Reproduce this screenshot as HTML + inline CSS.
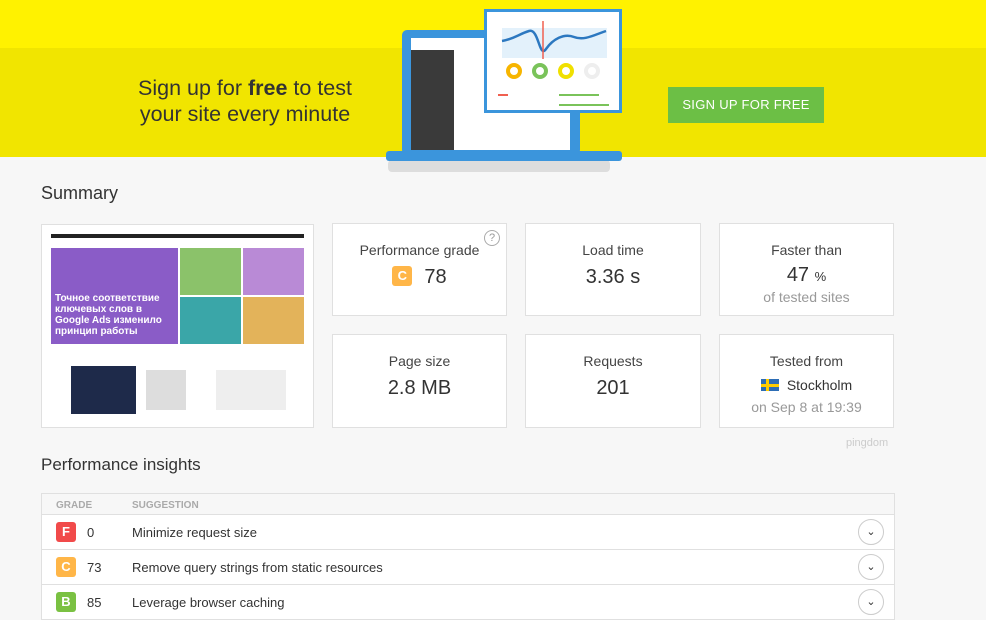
<!DOCTYPE html>
<html><head><meta charset="utf-8"><style>
*{margin:0;padding:0;box-sizing:border-box}
body{width:986px;height:619px;overflow:hidden;background:#f7f7f7;font-family:"Liberation Sans",sans-serif;color:#333;position:relative}
.top{position:absolute;left:0;top:0;width:986px;height:48px;background:#fff200}
.band{position:absolute;left:0;top:48px;width:986px;height:109px;background:#f1e500}
.abs{position:absolute}
.card{position:absolute;background:#fff;border:1px solid #e0e0e0;text-align:center}
.card .l{font-size:14px;color:#444;margin-top:18px}
.card .v{font-size:20px;color:#333;margin-top:8px}
.badge{display:inline-block;width:20px;height:20px;border-radius:3px;color:#fff;font-weight:bold;font-size:13px;line-height:20px;text-align:center}
.row{position:absolute;left:41px;width:854px;height:35px;background:#fff;border:1px solid #e0e0e0;border-top:none}
.row .badge{position:absolute;left:14px;top:7px}
.row .n{position:absolute;left:45px;top:10px;font-size:13px}
.row .s{position:absolute;left:90px;top:10px;font-size:13px}
.row .c{position:absolute;right:10px;top:4px;width:26px;height:26px;border:1px solid #ccc;border-radius:50%;text-align:center;font-size:11px;line-height:24px;color:#333;background:#fff}
</style></head><body>
<div class="top"></div><div class="band"></div>
<div class="abs" style="left:130px;top:75px;font-size:21.5px;color:#333;line-height:26px;text-align:center;width:230px">Sign up for <b>free</b> to test your site every minute</div>
<div class="abs" style="left:668px;top:87px;width:156px;height:36px;background:#6cbf45;color:#fff;font-size:13px;line-height:36px;text-align:center;letter-spacing:.3px">SIGN UP FOR FREE</div>
<div class="abs" style="left:388px;top:160px;width:222px;height:12px;background:#ddd;border-radius:4px"></div>
<div class="abs" style="left:402px;top:30px;width:178px;height:125px;background:#3b95dc;border-radius:5px"></div>
<div class="abs" style="left:411px;top:38px;width:159px;height:112px;background:#fff"></div>
<div class="abs" style="left:411px;top:50px;width:43px;height:100px;background:#3a3a3a"></div>
<div class="abs" style="left:386px;top:151px;width:236px;height:10px;background:#3b95dc;border-radius:3px"></div>
<div class="abs" style="left:484px;top:9px;width:138px;height:104px;background:#fff;border:3px solid #3b95dc"></div>
<div class="abs" style="left:502px;top:28px;width:105px;height:30px;background:#e3f1fb"></div>
<svg class="abs" style="left:484px;top:9px" width="138" height="104"><path d="M18 32 C30 30 35 25 45 22 S55 50 62 40 S80 24 90 28 S110 26 122 22" stroke="#2c78c0" stroke-width="2.5" fill="none"/><line x1="59" y1="12" x2="59" y2="50" stroke="#f06050" stroke-width="1.5"/>
<circle cx="30" cy="62" r="6" fill="none" stroke="#f7b500" stroke-width="4"/><circle cx="56" cy="62" r="6" fill="none" stroke="#7ac35a" stroke-width="4"/><circle cx="82" cy="62" r="6" fill="none" stroke="#f0e000" stroke-width="4"/><circle cx="108" cy="62" r="6" fill="none" stroke="#eee" stroke-width="4"/>
<rect x="14" y="85" width="10" height="2" fill="#f06050"/><rect x="75" y="85" width="40" height="2" fill="#7ac35a"/><rect x="75" y="95" width="50" height="2" fill="#7ac35a"/></svg>
<div class="abs" style="left:41px;top:183px;font-size:18px;color:#333">Summary</div>
<div class="abs" style="left:41px;top:224px;width:273px;height:204px;background:#fff;border:1px solid #e0e0e0;padding:9px">
 <div style="height:4px;background:#222"></div>
 <div style="height:10px;background:#fff"></div>
 <div style="display:flex;height:96px"><div style="width:127px;background:#8a5cc7;color:#fff;font-size:10px;font-weight:bold;padding:45px 4px 0">Точное соответствие ключевых слов в Google Ads изменило принцип работы</div><div style="flex:1;display:grid;grid-template-columns:1fr 1fr;gap:2px;margin-left:2px"><div style="background:#8bc26a"></div><div style="background:#b98ad6"></div><div style="background:#3aa6a8"></div><div style="background:#e3b35a"></div></div></div>
 <div style="height:60px;display:flex;margin-top:12px"><div style="width:65px;height:48px;background:#1e2a4a;margin-top:10px;margin-left:20px"></div><div style="width:40px;margin-left:10px;margin-top:14px;height:40px;background:#ddd"></div><div style="width:70px;margin-left:30px;height:40px;background:#eee;margin-top:14px"></div></div>
</div>
<div class="card" style="left:332px;top:223px;width:175px;height:93px"><div class="l">Performance grade</div><div class="v"><span class="badge" style="background:#ffb648;vertical-align:3px;margin-right:12px">C</span>78</div><div class="abs" style="right:6px;top:6px;width:16px;height:16px;border:1px solid #aaa;border-radius:50%;font-size:11px;color:#999;line-height:14px">?</div></div>
<div class="card" style="left:525px;top:223px;width:176px;height:93px"><div class="l">Load time</div><div class="v">3.36 s</div></div>
<div class="card" style="left:719px;top:223px;width:175px;height:93px"><div class="l">Faster than</div><div class="v" style="margin-top:6px">47 <span style="font-size:13px">%</span></div><div style="font-size:14px;color:#999;margin-top:2px">of tested sites</div></div>
<div class="card" style="left:332px;top:334px;width:175px;height:94px"><div class="l">Page size</div><div class="v">2.8 MB</div></div>
<div class="card" style="left:525px;top:334px;width:176px;height:94px"><div class="l">Requests</div><div class="v">201</div></div>
<div class="card" style="left:719px;top:334px;width:175px;height:94px"><div class="l">Tested from</div><div style="font-size:14px;margin-top:8px"><span style="display:inline-block;width:18px;height:12px;background:#2d6db5;position:relative;vertical-align:-1px;margin-right:8px"><span style="position:absolute;left:5px;top:0;width:3px;height:12px;background:#fecc00"></span><span style="position:absolute;left:0;top:5px;width:18px;height:3px;background:#fecc00"></span></span>Stockholm</div><div style="font-size:14px;color:#999;margin-top:6px">on Sep 8 at 19:39</div></div>
<div class="abs" style="left:846px;top:437px;font-size:11px;color:#ccc">pingdom</div>
<div class="abs" style="left:41px;top:455px;font-size:17px;color:#333">Performance insights</div>
<div class="abs" style="left:41px;top:493px;width:854px;height:22px;background:#f7f7f7;border:1px solid #e0e0e0;font-size:10px;color:#aaa;font-weight:bold"><span class="abs" style="left:14px;top:6px">GRADE</span><span class="abs" style="left:90px;top:6px">SUGGESTION</span></div>
<div class="row" style="top:515px"><span class="badge" style="background:#f14a4a">F</span><span class="n">0</span><span class="s">Minimize request size</span><span class="c">&#8964;</span></div>
<div class="row" style="top:550px"><span class="badge" style="background:#ffb648">C</span><span class="n">73</span><span class="s">Remove query strings from static resources</span><span class="c">&#8964;</span></div>
<div class="row" style="top:585px"><span class="badge" style="background:#7ac142">B</span><span class="n">85</span><span class="s">Leverage browser caching</span><span class="c">&#8964;</span></div>
</body></html>
